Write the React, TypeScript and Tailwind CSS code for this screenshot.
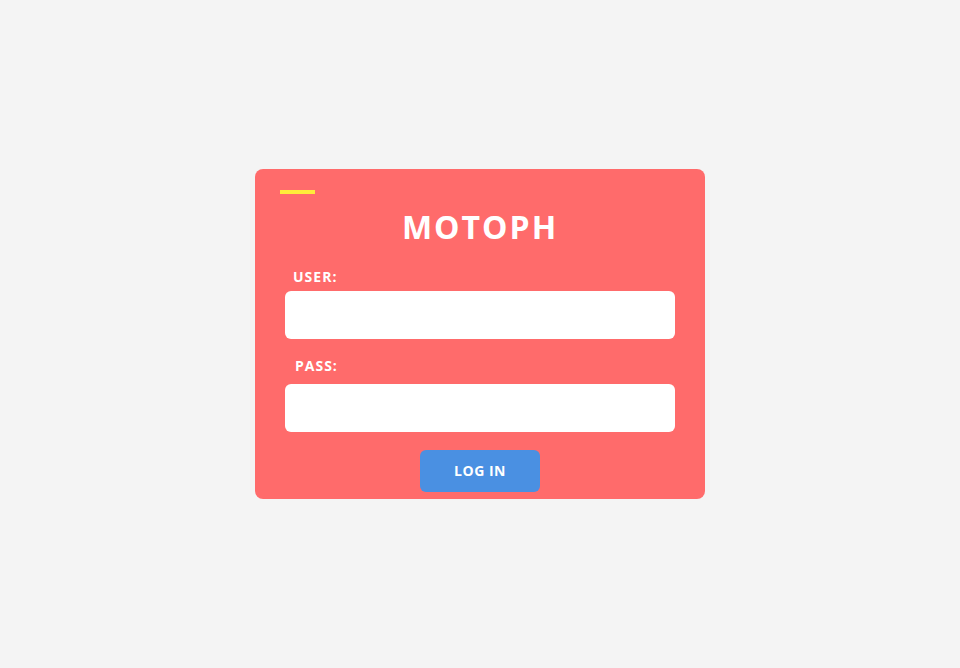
import React from "react";

const Field = (props: { label: string; type: string; labelClass: string; inputClass: string }) => (
  <div className="flex flex-col">
    <label className={`text-sm leading-5 font-bold tracking-[1px] text-white ${props.labelClass}`}>{props.label}</label>
    <input
      type={props.type}
      className={`h-12 w-full rounded-md bg-white px-3 text-base text-gray-800 outline-none ${props.inputClass}`}
    />
  </div>
);

export default function App() {
  return (
    <div
      className="flex min-h-[668px] w-full items-center justify-center bg-[#f4f4f4]"
      style={{ fontFamily: '"Open Sans", "Liberation Sans", sans-serif' }}
    >
      <div className="flex w-[450px] flex-col rounded-lg bg-[#ff6b6b] px-[30px] pt-[21px] pb-[7px] -mt-[1px]">
        <div className="-ml-[5px] h-1 w-[35px] bg-[#ffeb3b]" />
        <h1 className="mt-[13px] text-center text-[32px] leading-10 font-bold tracking-[2px] text-white">MOTOPH</h1>
        <Field label="USER:" type="text" labelClass="mt-5 pl-2" inputClass="mt-1" />
        <Field label="PASS:" type="password" labelClass="mt-[17px] pl-[10px]" inputClass="mt-2" />
        <div className="mt-[18px] flex justify-center">
          <button className="h-[42px] w-[120px] rounded-md bg-[#4a90e2] text-sm font-bold tracking-[0.5px] text-white">LOG IN</button>
        </div>
      </div>
    </div>
  );
}
